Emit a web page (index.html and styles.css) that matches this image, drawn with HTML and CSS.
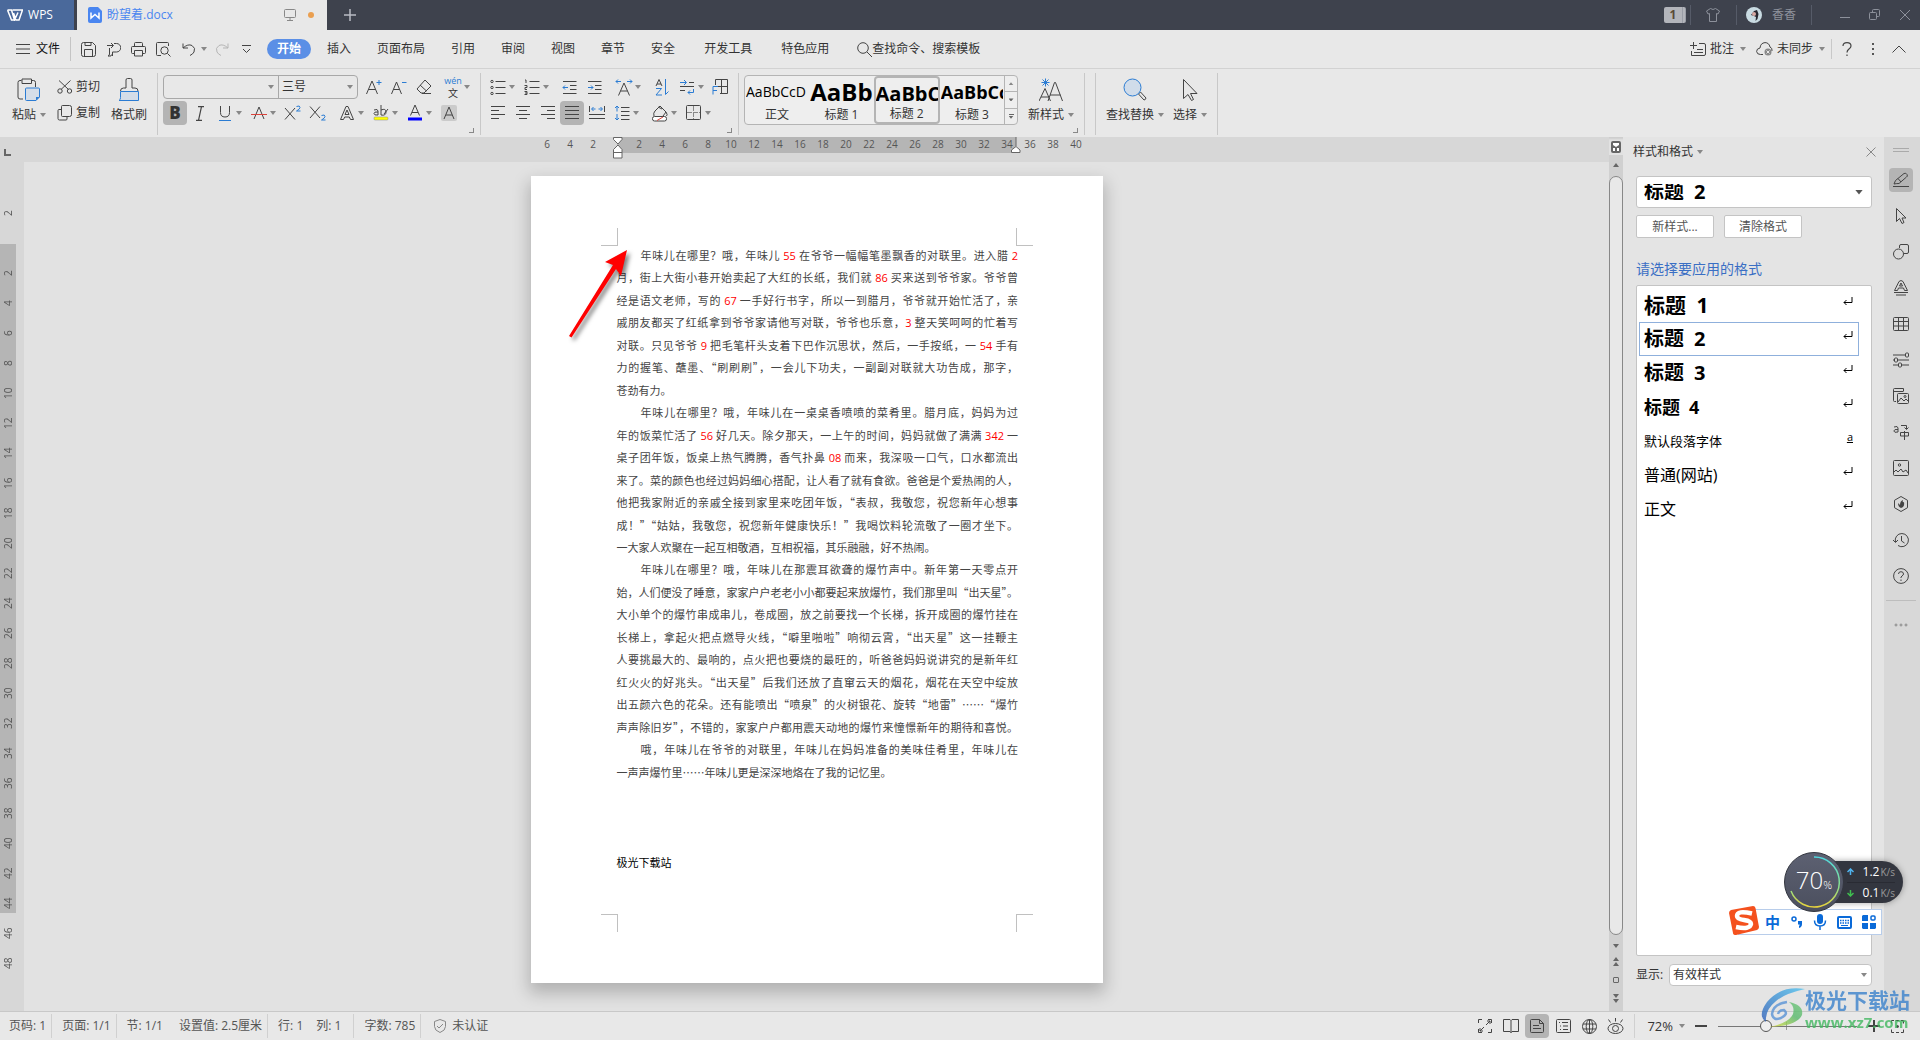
FILE: index.html
```html
<!DOCTYPE html>
<html lang="zh-CN">
<head>
<meta charset="utf-8">
<title>盼望着.docx - WPS</title>
<link rel="stylesheet" href="styles.css">
</head>
<body>
<header class="titlebar">
  <button class="home"><svg width="16" height="12" viewBox="0 0 16 12" class="ic white"><path d="M.5 1h4l3 10L11 3.500M.5 1l4 10h3M5.500 1h10L12 11H9L6.500 4" stroke-width="1.500"/></svg>WPS</button>
  <div class="tab">
    <svg width="14" height="16" viewBox="0 0 14 16"><path d="M2 0h8l4 4v10a2 2 0 0 1-2 2H2a2 2 0 0 1-2-2V2a2 2 0 0 1 2-2z" fill="#4a86f0"/><path d="M3 5.500v5.500L7 7.500 11 11V5.500" fill="none" stroke="#fff" stroke-width="1.500"/></svg>
    <span class="tabname">盼望着.docx</span>
    <svg width="12" height="12" viewBox="0 0 12 12" class="ic grey"><path d="M1.500.5h9q1 0 1 1v6q0 1-1 1h-9q-1 0-1-1v-6q0-1 1-1zM6 8.500v3M3 11.500h6"/></svg>
    <i class="dot"></i>
  </div>
  <button class="plus" aria-label="新建"><svg width="12" height="12" viewBox="0 0 12 12" class="ic"><path d="M6 0v12M0 6h12" stroke="#b9bcc4" stroke-width="1.500"/></svg></button>
  <div class="winctl">
    <span class="badge"><b>1</b></span><i class="vs"></i>
    <button class="shirt" aria-label="皮肤"><svg width="14" height="14" viewBox="0 0 14 14" class="ic dim"><path d="M4.500.5q2.500 2 5 0l4 2.500-1.500 3-1.500-.5v8h-7v-8L2 6 .5 3z"/></svg></button><i class="vs"></i>
    <span class="user"><svg width="16" height="16" viewBox="0 0 16 16"><circle cx="8" cy="8" r="8" fill="#c9dbe2"/><path d="M5 8l3-4 3-1 1.500 4-1 5-2 2 .5-4-2-1z" fill="#26272f"/><circle cx="8" cy="7" r="2" fill="#d8a9a3"/></svg>香香</span><i class="vs"></i>
    <button aria-label="最小化"><svg width="12" height="12" viewBox="0 0 12 12" class="ic dim"><path d="M1 8.500h10"/></svg></button>
    <button aria-label="还原"><svg width="12" height="12" viewBox="0 0 12 12" class="ic dim"><rect x=".5" y="3.500" width="7" height="7" rx="1"/><path d="M3.500 3.500v-2q0-1 1-1h5q1 0 1 1v5q0 1-1 1h-2"/></svg></button>
    <button aria-label="关闭"><svg width="12" height="12" viewBox="0 0 12 12" class="ic dim"><path d="M1 1l10 10M11 1L1 11"/></svg></button>
  </div>
</header>

<nav class="menubar">
  <button class="file"><svg width="14" height="10" viewBox="0 0 14 10" class="ic"><path d="M0 .5h14M0 5h14M0 9.500h14"/></svg>文件</button>
  <i class="mdiv"></i>
  <div class="quick">
    <button aria-label="保存"><svg width="15" height="15" viewBox="0 0 15 15" class="ic"><path d="M.5 2.500q0-2 2-2h9l3 3v9q0 2-2 2h-10q-2 0-2-2zM3.500 14v-6.500h8V14M4 .5v3h6v-3"/></svg></button>
    <button aria-label="输出"><svg width="15" height="15" viewBox="0 0 15 15" class="ic"><path d="M1 3.500h6M5 1l2.500 2.500L5 6M3.500 6v6q0 1.500-1.500 2h3q0-1 1-1.500M6.500 14v-4h4a3.800 3.800 0 0 0 0-8.500H8"/></svg></button>
    <button aria-label="打印"><svg width="15" height="15" viewBox="0 0 15 15" class="ic"><path d="M3.500 4.500v-3q0-1 1-1h6q1 0 1 1v3M3.500 11.500h-2q-1 0-1-1v-5q0-1 1-1h12q1 0 1 1v5q0 1-1 1h-2M3.500 8.500h8v5.500h-8z"/></svg></button>
    <button aria-label="打印预览"><svg width="15" height="15" viewBox="0 0 15 15" class="ic"><path d="M5 13.500H1.500q-1 0-1-1v-11q0-1 1-1h10q1 0 1 1V4M11.500 11.500l3 3"/><circle cx="8.500" cy="8.500" r="3.700"/></svg></button>
    <button aria-label="撤销"><svg width="14" height="14" viewBox="0 0 14 14" class="ic"><path d="M1 1.500v4.500h5M1 6q5-4.500 9-2.500 4 2.500 2 6.500-1 2-4 3.500"/></svg></button><i class="ca"></i>
    <button aria-label="恢复"><svg width="14" height="14" viewBox="0 0 14 14" class="ic pale"><path d="M13 1.500v4.500H8M13 6Q8 1.500 4 3.500 0 6 2 10q1 2 4 3.500"/></svg></button>
    <button aria-label="自定义"><svg width="9" height="9" viewBox="0 0 9 9" class="ic"><path d="M0 .5h9M1 4l3.500 3.500L8 4"/></svg></button>
  </div>
  <button class="on">开始</button>
  <div class="tabs"><button>插入</button><button>页面布局</button><button>引用</button><button>审阅</button><button>视图</button><button>章节</button><button>安全</button><button class="wide">开发工具</button><button>特色应用</button></div>
  <label class="search"><svg width="15" height="15" viewBox="0 0 15 15" class="ic"><circle cx="6" cy="6" r="5.300"/><path d="M10 10l5 5"/></svg><input type="text" placeholder="查找命令、搜索模板"></label>
  <div class="mright">
    <button><svg width="16" height="14" viewBox="0 0 16 14" class="ic"><path d="M3.500 0v7M0 3.500h7M9 1.500h5q1.500 0 1.500 1.500v9q0 1.500-1.500 1.500H1.500V9M7 7.500h6M4 10.500h9"/></svg>批注<i class="ca"></i></button>
    <button><svg width="17" height="14" viewBox="0 0 17 14" class="ic"><path d="M7 12.500H4.500Q1 12.500.6 9.500.6 6.500 4 6q.5-5 5-5.400Q13 .6 14 5q2.500 1 2 4"/><circle cx="12" cy="10" r="3.500" fill="#888" stroke="none"/><path d="M10.500 8.500l3 3m0-3l-3 3" stroke="#e8e8e8"/></svg>未同步<i class="ca"></i></button>
    <i class="vs light"></i>
    <button class="sq" aria-label="帮助"><svg width="10" height="14" viewBox="0 0 10 14" class="ic"><path d="M1 4Q1 .7 5 .7T9 4q0 1.500-2 3T5 10.500M5 12.500V14" stroke-width="1.200"/></svg></button>
    <button class="sq" aria-label="更多"><svg width="3" height="13" viewBox="0 0 3 13"><path d="M0 0h2v2H0zM0 5h2v2H0zM0 10h2v2H0z" fill="#555"/></svg></button>
    <button class="sq" aria-label="收起"><svg width="14" height="8" viewBox="0 0 14 8" class="ic"><path d="M.5 7.500L7 1l6.500 6.500"/></svg></button>
  </div>
</nav>

<section class="ribbon">
  <div class="group clip">
    <button class="big"><svg width="24" height="24" viewBox="0 0 24 24" class="ic"><path d="M4.500 2.500H3q-2 0-2 2V19q0 2 2 2h3M15 2.500h1.500q2 0 2 2V9M5 1h9.500v4.500H5z"/><path d="M8.500 11q0-1 1-1h12q1 0 1 1v8l-3.500 3.500H9.500q-1 0-1-1z" fill="#d4dde8" stroke="#2b7cd3"/><path d="M22.500 19H19v3.500z" fill="#2b7cd3" stroke="none"/></svg><span>粘贴<i class="ca"></i></span></button>
    <div class="stack">
      <button class="lb"><svg width="16" height="14" viewBox="0 0 16 14" class="ic"><path d="M2 .5l9.500 9M13.500.5L4 9.500"/><circle cx="3" cy="11" r="2.200"/><circle cx="12.500" cy="11" r="2.200"/></svg>剪切</button>
      <button class="lb"><svg width="16" height="16" viewBox="0 0 16 16" class="ic"><path d="M5.500.5h7q2 0 2 2v7q0 2-2 2h-7q-1 0-1-1v-9q0-1 1-1zM4.500 4.500H2q-1 0-1 1v8q0 1.500 1.500 1.500H9q1 0 1-1v-2.500"/></svg>复制</button>
    </div>
    <button class="big"><svg width="24" height="24" viewBox="0 0 24 24" class="ic"><path d="M3.500 13q0-3 3-3H9V2q0-1.500 1.500-1.500h3Q15 .5 15 2v8h3q3 0 3 3"/><path d="M3.500 13.500h18v9H2q1.500-.5 1.500-3z" fill="#d4dde8" stroke="#2b7cd3"/></svg><span>格式刷</span></button>
  </div>
  <div class="group font">
    <div class="row">
      <div class="combo"><span class="pick fam"><select aria-label="字体"><option></option></select></span><span class="pick size"><select aria-label="字号"><option>三号</option></select></span></div>
      <button class="ib" aria-label="增大"><svg width="18" height="16" viewBox="0 0 18 16" class="ic"><path d="M1.500 15L7 2l5.500 13M3.500 10.500h7"/><path d="M11.500 3.500h5M14 1v5" class="bl"/></svg></button>
      <button class="ib" aria-label="减小"><svg width="18" height="16" viewBox="0 0 18 16" class="ic"><path d="M1.500 15L6.500 3l5 12M3.500 10.500h6"/><path d="M12 3.500h4.500" class="bl"/></svg></button>
      <button class="ib" aria-label="清除"><svg width="18" height="16" viewBox="0 0 18 16" class="ic"><path d="M10 1l6 6-7 7H6L2 10zM5 6l6.500 6M7 14.500h9"/></svg></button>
      <button class="sb sp" aria-label="拼音"><span class="pin"><small>wén</small><em>文</em></span><i class="ca"></i></button>
    </div>
    <div class="row">
      <button class="ib act" aria-label="加粗"><b class="boldb">B</b></button>
      <button class="ib" aria-label="斜体"><svg width="10" height="15" viewBox="0 0 10 15" class="ic"><path d="M3 .7h6M1 14.300h6M6.500.7l-3 13.600" stroke-width="1.200"/></svg></button>
      <button class="sb" aria-label="下划线"><svg width="18" height="16" viewBox="0 0 18 16" class="ic"><path d="M4.500 1v6.500Q4.500 12 9 12t4.500-4.500V1"/><path d="M3 15.500h12" class="bl"/></svg><i class="ca"></i></button>
      <button class="sb" aria-label="删除线"><svg width="18" height="16" viewBox="0 0 18 16" class="ic"><path d="M4 14L9 2l5 12"/><path d="M1 9.500h16" stroke="#d9433b"/></svg><i class="ca"></i></button>
      <button class="ib" aria-label="上标"><svg width="18" height="16" viewBox="0 0 18 16" class="ic"><path d="M1 3l10 11.500M11 3L1 14.500"/><path d="M12.500 1.500q3.500-1.500 3.500 1 0 1.500-3.500 3.500h4" class="bl"/></svg></button>
      <button class="ib" aria-label="下标"><svg width="18" height="16" viewBox="0 0 18 16" class="ic"><path d="M1 1.500L11 13M11 1.500L1 13"/><path d="M12.500 10.500q3.500-1.500 3.500 1 0 1.500-3.500 3.500h4" class="bl"/></svg></button>
      <button class="sb sp" aria-label="文字效果"><svg width="18" height="16" viewBox="0 0 18 16" class="ic"><path d="M2.500 14.500L8 1.500h2l5.500 13h-3L11.300 12H6.700l-1.200 2.500zM7 9.500h4L9 5z"/></svg><i class="ca"></i></button>
      <button class="sb" aria-label="突出显示"><svg width="18" height="16" viewBox="0 0 18 16" class="ic"><path d="M2 5q4-1.500 4 1v4Q2 10.500 2 8.500T6 7M9 0v10q5 1 5-3t-5-2M16 4l-4 5" /><rect x="2" y="12" width="14" height="3" rx="1" fill="#ff0" stroke="#888" stroke-width=".5"/></svg><i class="ca"></i></button>
      <button class="sb" aria-label="字体颜色"><svg width="18" height="16" viewBox="0 0 18 16" class="ic"><path d="M4.500 10.500L9 0l4.500 10.500M6 7.500h6"/><rect x="2" y="12.500" width="14" height="3" fill="#00f" stroke="none"/></svg><i class="ca"></i></button>
      <button class="ib" aria-label="字符底纹"><svg width="16" height="16" viewBox="0 0 16 16" class="ic"><rect width="16" height="16" rx="2" fill="#cbcbcb" stroke="none"/><path d="M3 14L8 2l5 12M5 10h6"/></svg></button>
    </div>
    <i class="launch"></i>
  </div>
  <div class="group para">
    <div class="row">
      <button class="sb" aria-label="项目符号"><svg width="16" height="16" viewBox="0 0 16 16" class="ic"><path d="M5.500 2.500h10M5.500 8.500h10M5.500 14.500h10"/><circle cx="2" cy="2.500" r="1.200"/><circle cx="2" cy="8.500" r="1.200"/><circle cx="2" cy="14.500" r="1.200"/></svg><i class="ca"></i></button>
      <button class="sb" aria-label="编号"><svg width="16" height="16" viewBox="0 0 16 16" class="ic"><path d="M5.500 2.500h10M5.500 8.500h10M5.500 14.500h10M1 1h1v3M.5 6.500H3v2H1v2h2M.5 12.500H3v3H.5M1 14h2"/></svg><i class="ca"></i></button>
      <button class="ib sp" aria-label="减少缩进"><svg width="15" height="14" viewBox="0 0 15 14" class="ic"><path d="M1 1.500h13.500M8 5.500h6.500M8 9.500h6.500M1 13.500h13.500"/><path d="M1 7.500h5M3 5.500l-2 2 2 2" class="bl"/></svg></button>
      <button class="ib" aria-label="增加缩进"><svg width="15" height="14" viewBox="0 0 15 14" class="ic"><path d="M1 1.500h13.500M8 5.500h6.500M8 9.500h6.500M1 13.500h13.500"/><path d="M1 7.500h5M4 5.500l2 2-2 2" class="bl"/></svg></button>
      <button class="sb sp" aria-label="中文版式"><svg width="18" height="17" viewBox="0 0 18 17" class="ic"><path d="M3.500 16.500L9 4l5.500 12.500M5.500 12h7"/><path d="M6 2.500H1m2-2l-2 2 2 2M12 2.500h5m-2-2l2 2-2 2" class="bl"/></svg><i class="ca"></i></button>
      <button class="ib sp" aria-label="排序"><svg width="14" height="17" viewBox="0 0 14 17" class="ic"><path d="M1 7l3-6.500L7 7M2 5h4"/><path d="M1 9.500h5.500l-5.500 6.500h6M10.500 0v15.500l3-3" class="bl"/></svg></button>
      <button class="sb" aria-label="制表符"><svg width="16" height="16" viewBox="0 0 16 16" class="ic"><path d="M10 3.500h5M1 7.500h14M1 11.500h5"/><path d="M1 3.500h6M5 1l2.500 2.500L5 6M14.500 10v3.500H9m2-2l-2 2 2 2" class="bl"/></svg><i class="ca"></i></button>
      <button class="ib" aria-label="段落布局"><svg width="17" height="16" viewBox="0 0 17 16" class="ic"><path d="M3.500 6V.5h12v14H8M9.500.5v14M3.500 7.500h12"/><path d="M1 15.500v-8h5M1 11.500h4" class="bl"/></svg></button>
    </div>
    <div class="row">
      <button class="ib" aria-label="左对齐"><svg width="14" height="14" viewBox="0 0 14 14" class="ic"><path d="M0 .5h14M0 4.500h8M0 8.500h14M0 12.500h8"/></svg></button>
      <button class="ib" aria-label="居中"><svg width="14" height="14" viewBox="0 0 14 14" class="ic"><path d="M0 .5h14M3 4.500h8M0 8.500h14M3 12.500h8"/></svg></button>
      <button class="ib" aria-label="右对齐"><svg width="14" height="14" viewBox="0 0 14 14" class="ic"><path d="M0 .5h14M6 4.500h8M0 8.500h14M6 12.500h8"/></svg></button>
      <button class="ib act" aria-label="两端对齐"><svg width="14" height="14" viewBox="0 0 14 14" class="ic"><path d="M0 .5h14M0 4.500h14M0 8.500h14M0 12.500h14"/></svg></button>
      <button class="ib" aria-label="分散对齐"><svg width="16" height="14" viewBox="0 0 16 14" class="ic"><path d="M.5 0v6M15.500 0v6M0 8.500h16M0 12.500h16"/><path d="M3 3h3.500M4.500 1l-2 2 2 2M9.500 3H13M11.500 1l2 2-2 2" class="bl"/></svg></button>
      <button class="sb" aria-label="行距"><svg width="16" height="16" viewBox="0 0 16 16" class="ic"><path d="M7 2.500h8.500M7 6.500h8.500M7 10.500h8.500M7 14.500h8.500"/><path d="M3 1v5.500M1 3l2-2 2 2M3 9v6M1 13l2 2 2-2" class="bl"/></svg><i class="ca"></i></button>
      <button class="sb sp" aria-label="底纹"><svg width="18" height="17" viewBox="0 0 18 17" class="ic"><path d="M3 11q-1-3 1-5l5-5 6 6-3 4M7 2l4 2M15 7q2 3 .5 4"/><rect x="1.500" y="11.500" width="14" height="4.500" rx="2" fill="#fff"/><path d="M6 15.500l6-3.500" stroke="#d9433b"/></svg><i class="ca"></i></button>
      <button class="sb" aria-label="边框"><svg width="16" height="16" viewBox="0 0 16 16" class="ic"><rect x=".5" y=".5" width="14" height="14" rx="1"/><path d="M7.500 1v13M1 7.500h13" stroke="#888" stroke-dasharray="5 1"/></svg><i class="ca"></i></button>
    </div>
    <i class="launch"></i>
  </div>
  <div class="group styles">
    <div class="gallery">
      <button class="g"><span class="s0">AaBbCcD</span>正文</button>
      <button class="g"><span class="s1">AaBb</span>标题 1</button>
      <button class="g sel"><span class="s2">AaBbC</span>标题 2</button>
      <button class="g"><span class="s3">AaBbCc</span>标题 3</button>
      <div class="step"><button aria-label="上"><i class="ca up"></i></button><button aria-label="下"><i class="ca dk"></i></button><button aria-label="展开"><i class="bar"></i><i class="ca dk"></i></button></div>
    </div>
    <button class="big new"><svg width="24" height="24" viewBox="0 0 24 24" class="ic"><path d="M0 23L6 10.500 11.500 23M2 19h8M9 23l6.500-18.500h1L23.500 23M11 17h10.500"/><path d="M6.500.5v8M2.500 4.500h8M3.500 1.500l6 6M9.500 1.500l-6 6" class="bl"/></svg><span>新样式<i class="ca"></i></span></button>
    <i class="launch"></i>
  </div>
  <div class="group edit">
    <button class="big"><svg width="24" height="24" viewBox="0 0 24 24" class="ic"><path d="M15.500 16l2-2 5.500 6q-.5 2-2 2z"/><circle cx="9.500" cy="9.500" r="8.500" fill="#d0dcea" stroke="#2b7cd3"/></svg><span>查找替换<i class="ca"></i></span></button>
    <button class="big"><svg width="24" height="24" viewBox="0 0 24 24" class="ic"><path d="M5.500 1.500v19l4.500-4 3.500 6 2-1-3-6h6.500z"/></svg><span>选择<i class="ca"></i></span></button>
  </div>
</section>

<main class="work">
  <section class="editor">
    <div class="corner"></div>
    <div class="hruler"><div class="hband"><span>6</span><span>4</span><span>2</span><span></span><span>2</span><span>4</span><span>6</span><span>8</span><span>10</span><span>12</span><span>14</span><span>16</span><span>18</span><span>20</span><span>22</span><span>24</span><span>26</span><span>28</span><span>30</span><span>32</span><span>34</span><span>36</span><span>38</span><span>40</span>
      <svg class="mk left" width="10" height="22" viewBox="0 0 10 22"><path d="M.5.5h8.500v2L5 7 .5 2.500zM5 8l4 4.500v8.500H.5v-8.500zM.5 15.500h8.500" fill="#fff" stroke="#666"/></svg>
      <svg class="mk right" width="10" height="16" viewBox="0 0 10 16"><path d="M5 0v9" stroke="#666"/><path d="M5 9.500l4 3.500v2.500H.5V13z" fill="#fff" stroke="#666"/></svg></div></div>
    <div class="vruler"><span>2</span><span></span><span>2</span><span>4</span><span>6</span><span>8</span><span>10</span><span>12</span><span>14</span><span>16</span><span>18</span><span>20</span><span>22</span><span>24</span><span>26</span><span>28</span><span>30</span><span>32</span><span>34</span><span>36</span><span>38</span><span>40</span><span>42</span><span>44</span><span>46</span><span>48</span></div>
    <div class="canvas">
      <article class="page">
        <i class="cm tl"></i><i class="cm tr"></i><i class="cm bl2"></i><i class="cm br"></i>
        <div class="text">
          <p><span class="in">年味儿在哪里？哦，年味儿 <b>55</b> 在爷爷一幅幅笔墨飘香的对联里。进入腊 <b>2</b></span><span>月，街上大街小巷开始卖起了大红的长纸，我们就 <b>86</b> 买来送到爷爷家。爷爷曾</span><span>经是语文老师，写的 <b>67</b> 一手好行书字，所以一到腊月，爷爷就开始忙活了，亲</span><span>戚朋友都买了红纸拿到爷爷家请他写对联，爷爷也乐意，<b>3</b> 整天笑呵呵的忙着写</span><span>对联。只见爷爷 <b>9</b> 把毛笔杆头支着下巴作沉思状，然后，一手按纸，一 <b>54</b> 手有</span><span>力的握笔、蘸墨、“刷刷刷”，一会儿下功夫，一副副对联就大功告成，那字，</span><span class="end">苍劲有力。</span></p>
          <p><span class="in">年味儿在哪里？哦，年味儿在一桌桌香喷喷的菜肴里。腊月底，妈妈为过</span><span>年的饭菜忙活了 <b>56</b> 好几天。除夕那天，一上午的时间，妈妈就做了满满 <b>342</b> 一</span><span>桌子团年饭，饭桌上热气腾腾，香气扑鼻 <b>08</b> 而来，我深吸一口气，口水都流出</span><span>来了。菜的颜色也经过妈妈细心搭配，让人看了就有食欲。爸爸是个爱热闹的人，</span><span>他把我家附近的亲戚全接到家里来吃团年饭，“表叔，我敬您，祝您新年心想事</span><span>成！”“姑姑，我敬您，祝您新年健康快乐！”我喝饮料轮流敬了一圈才坐下。</span><span class="end">一大家人欢聚在一起互相敬酒，互相祝福，其乐融融，好不热闹。</span></p>
          <p><span class="in">年味儿在哪里？哦，年味儿在那震耳欲聋的爆竹声中。新年第一天零点开</span><span>始，人们便没了睡意，家家户户老老小小都要起来放爆竹，我们那里叫“出天星”。</span><span>大小单个的爆竹串成串儿，卷成圈，放之前要找一个长梯，拆开成圈的爆竹挂在</span><span>长梯上，拿起火把点燃导火线，“噼里啪啦”响彻云霄，“出天星”这一挂鞭主</span><span>人要挑最大的、最响的，点火把也要烧的最旺的，听爸爸妈妈说讲究的是新年红</span><span>红火火的好兆头。“出天星”后我们还放了直窜云天的烟花，烟花在天空中绽放</span><span>出五颜六色的花朵。还有能喷出“喷泉”的火树银花、旋转“地雷”……“爆竹</span><span>声声除旧岁”，不错的，家家户户都用震天动地的爆竹来憧憬新年的期待和喜悦。</span></p>
          <p><span class="in">哦，年味儿在爷爷的对联里，年味儿在妈妈准备的美味佳肴里，年味儿在</span><span class="end">一声声爆竹里……年味儿更是深深地烙在了我的记忆里。</span></p>
          <p><span></span><span></span><span></span><span class="end sign">极光下载站</span></p>
        </div>
        <svg class="arrow" width="76" height="104" viewBox="0 0 76 104"><path d="M7 91L51 20l-8-3L65 5l-6 26-5-7L9.500 92.500z" fill="#f00"/></svg>
      </article>
    </div>
  </section>

  <div class="scroll">
    <svg width="10" height="12" viewBox="0 0 10 12"><rect width="10" height="12" rx="2" fill="#666"/><path d="M2 2h6v2L5 6 2 4zM2 7h2v3H2zM6 7h2v3H6z" fill="#fff"/></svg>
    <div class="rail"><i class="ca up dk"></i><div class="thumb"></div><i class="ca dk"></i>
      <span class="dbl"><i class="ca up dk"></i><i class="ca up dk"></i></span><i class="sqr"></i><span class="dbl"><i class="ca dk"></i><i class="ca dk"></i></span></div>
  </div>

  <aside class="panel">
    <div class="phead"><span>样式和格式<i class="ca"></i></span><button aria-label="关闭"><svg width="10" height="10" viewBox="0 0 10 10" class="ic grey"><path d="M.5.5l9 9M9.500.5l-9 9"/></svg></button></div>
    <span class="pick cur"><select aria-label="当前样式"><option>标题&ensp;2</option></select></span>
    <div class="pbtn"><button>新样式...</button><button>清除格式</button></div>
    <h2>请选择要应用的格式</h2>
    <div class="list">
      <button class="h22">标题&ensp;1<svg width="10" height="8" viewBox="0 0 10 8"><path d="M9 0v5.500H1M3.500 3L1 5.500 3.500 8" fill="none" stroke="#000"/></svg></button>
      <button class="h20 sel">标题&ensp;2<svg width="10" height="8" viewBox="0 0 10 8"><path d="M9 0v5.500H1M3.500 3L1 5.500 3.500 8" fill="none" stroke="#000"/></svg></button>
      <button class="h20">标题&ensp;3<svg width="10" height="8" viewBox="0 0 10 8"><path d="M9 0v5.500H1M3.500 3L1 5.500 3.500 8" fill="none" stroke="#000"/></svg></button>
      <button class="h18">标题&ensp;4<svg width="10" height="8" viewBox="0 0 10 8"><path d="M9 0v5.500H1M3.500 3L1 5.500 3.500 8" fill="none" stroke="#000"/></svg></button>
      <button class="n13">默认段落字体<u>a</u></button>
      <button class="n16">普通(网站)<svg width="10" height="8" viewBox="0 0 10 8"><path d="M9 0v5.500H1M3.500 3L1 5.500 3.500 8" fill="none" stroke="#000"/></svg></button>
      <button class="n16">正文<svg width="10" height="8" viewBox="0 0 10 8"><path d="M9 0v5.500H1M3.500 3L1 5.500 3.500 8" fill="none" stroke="#000"/></svg></button>
    </div>
    <div class="show"><label for="show">显示:</label><span class="pick"><select id="show"><option>有效样式</option></select></span></div>
  </aside>

  <nav class="side">
    <i class="grip"></i>
    <button class="act" aria-label="样式"><svg width="16" height="16" viewBox="0 0 16 16" class="ic"><path d="M0 14.500h16M1 12l1.500-3.500L11 1.500q2-1 3 1t-.5 2.500L6 11.500q-3 0-5 .5zM5 6.500l3 3.500"/></svg></button>
    <button aria-label="选择"><svg width="16" height="16" viewBox="0 0 16 16" class="ic"><path d="M3.500.5v13l3-3 2.500 5 2-1-2-4.500h4z"/></svg></button>
    <button aria-label="形状"><svg width="16" height="16" viewBox="0 0 16 16" class="ic"><path d="M6.500 4V2q0-1.500 1.500-1.500h6q1.500 0 1.500 1.500v6q0 1.500-1.500 1.500h-3"/><circle cx="5.500" cy="10" r="5"/></svg></button>
    <button aria-label="艺术字"><svg width="16" height="16" viewBox="0 0 16 16" class="ic"><path d="M1.500 10.500L6 1.500q2-2 4 0l4.500 9h-3L10.500 8h-5l-1 2.500zM6.500 6h3L8 3zM1 12.500h14M3 15h10"/></svg></button>
    <button aria-label="表格"><svg width="16" height="16" viewBox="0 0 16 16" class="ic"><rect x=".5" y="1.500" width="15" height="13" rx="1"/><path d="M1 5.500h14M1 10h14M5.500 2v12M10.500 2v12"/></svg></button>
    <button aria-label="设置"><svg width="16" height="16" viewBox="0 0 16 16" class="ic"><path d="M0 3h12M0 8h1.500M5 8h11M0 13h5M9 13h7"/><rect x="12.500" y="1" width="3" height="4" rx="1"/><rect x="1.500" y="6" width="3" height="4" rx="1"/><rect x="5.500" y="11" width="3" height="4" rx="1"/></svg></button>
    <button aria-label="素材"><svg width="16" height="16" viewBox="0 0 16 16" class="ic"><path d="M10.500 3V.5h-9q-1 0-1 1v11q0 1 1 1H3M.5 3.500h10"/><rect x="4.500" y="5.500" width="11" height="10" rx="1"/><path d="M5 14l3-4 3 3 2-2 2 2"/><circle cx="12" cy="8.500" r="1"/></svg></button>
    <button aria-label="翻译"><svg width="16" height="16" viewBox="0 0 16 16" class="ic"><path d="M1 3q4-1.500 4 1v4Q1 9 .8 7 1 5 5 5.500M8 1.500h5.500V5M11.500 3.500l2 2 2-2M7.500 8.500h8v3.500h-8zM11.500 7v9"/></svg></button>
    <button aria-label="图片"><svg width="16" height="16" viewBox="0 0 16 16" class="ic"><rect x=".5" y=".5" width="15" height="15" rx="1"/><path d="M1 12l2-2 2 2 3-3 2 3 3-2 2 3"/><circle cx="6.500" cy="5" r="1.200"/></svg></button>
    <button aria-label="推荐"><svg width="16" height="16" viewBox="0 0 16 16" class="ic"><path d="M8 .5l6.500 3.800v7.400L8 15.500l-6.500-3.800V4.300z"/><path d="M5 7l2 2q0-4 3-5-1 3 1 2 1 5-3 6-3-1-3-5z" fill="#444" stroke="none"/></svg></button>
    <button aria-label="历史"><svg width="16" height="16" viewBox="0 0 16 16" class="ic"><path d="M2.500 10A6.600 6.600 0 1 1 5 13.500M0 8l2.500 2.500L5 8M8.500 4v5l3 2"/></svg></button>
    <button aria-label="帮助"><svg width="16" height="16" viewBox="0 0 16 16" class="ic"><circle cx="8" cy="8" r="7.400"/><path d="M5.500 6q0-2.300 2.500-2.300T10.500 6Q10.500 7 9 8T8 10M8 11.500V13"/></svg></button>
    <i class="line"></i>
    <button aria-label="更多"><svg width="14" height="4" viewBox="0 0 14 4" class="ic grey"><circle cx="2" cy="2" r="1"/><circle cx="7" cy="2" r="1"/><circle cx="12" cy="2" r="1"/></svg></button>
  </nav>
</main>

<footer class="status">
  <div class="sinfo"><span>页码: 1</span><span>页面: 1/1</span><span class="two">节: 1/1<em>设置值: 2.5厘米</em></span><span class="pos">行: 1<em>列: 1</em></span><span>字数: 785</span><span class="cert"><svg width="12" height="14" viewBox="0 0 12 14" class="ic grey"><path d="M6 .5l5.500 2v5q0 4-5.500 6-5.500-2-5.500-6v-5zM3 7l2 2 4-4"/></svg>未认证</span></div>
  <div class="views">
    <button aria-label="全屏"><svg width="14" height="14" viewBox="0 0 14 14" class="ic"><path d="M.5 4V.5H4M10 .5h3.500V4M13.500 10v3.500H10M4 13.500H.5V10M8 6l4-4M9 2h3v3M6 8l-4 4M2 9v3h3"/></svg></button>
    <button aria-label="阅读"><svg width="16" height="14" viewBox="0 0 16 14" class="ic"><path d="M8 1.500V14M.5.5H7l1 1 1-1h6.500v12H9l-1 1-1-1H.5z"/></svg></button>
    <button class="act" aria-label="页面"><svg width="14" height="14" viewBox="0 0 14 14" class="ic"><path d="M1.500.5h8l4 4v8q0 1-1 1h-11q-1 0-1-1v-11q0-1 1-1zM9.500.5v4h4M3 6.500h6M3 9.500h8"/></svg></button>
    <button aria-label="大纲"><svg width="15" height="14" viewBox="0 0 15 14" class="ic"><rect x=".5" y=".5" width="14" height="13" rx="1"/><path d="M3 3.500h1M6 3.500h6M4 7h1M7 7h5M4 10.500h1M7 10.500h5"/></svg></button>
    <button aria-label="网页"><svg width="15" height="15" viewBox="0 0 15 15" class="ic"><circle cx="7.500" cy="7.500" r="7"/><ellipse cx="7.500" cy="7.500" rx="3.300" ry="7"/><path d="M1 5h13M1 10h13M7.500.5v14"/></svg></button>
    <button aria-label="护眼"><svg width="17" height="16" viewBox="0 0 17 16" class="ic"><ellipse cx="8.500" cy="10.500" rx="7.500" ry="5"/><circle cx="8.500" cy="10.500" r="3"/><path d="M8.500 0v3.500M1.500 1.500l2 3M15.500 1.500l-2 3"/></svg></button>
  </div>
  <div class="zoom"><button class="pct">72%<i class="ca"></i></button><button aria-label="缩小"><svg width="12" height="12" viewBox="0 0 12 12" class="ic"><path d="M0 6h12" stroke-width="2"/></svg></button><input type="range" min="0" max="100" value="33" aria-label="缩放"><button aria-label="放大"><svg width="12" height="12" viewBox="0 0 12 12" class="ic"><path d="M0 6h12M6 0v12" stroke-width="2"/></svg></button><button aria-label="适合"><svg width="13" height="13" viewBox="0 0 13 13" class="ic"><path d="M3 .5H.5v3M10 .5h2.500v3M3 12.500H.5v-3M10 12.500h2.500v-3M5 .5h3M5 12.500h3"/><circle cx="6.500" cy="6.500" r="1" fill="#444"/></svg></button></div>
</footer>

<div class="net">
  <div class="ring"><svg width="60" height="60" viewBox="0 0 60 60"><defs><linearGradient id="rg" x1="0" y1="0" x2="0" y2="1"><stop offset="0" stop-color="#4fd8e0"/><stop offset=".6" stop-color="#8be08c"/><stop offset="1" stop-color="#e8d33c"/></linearGradient><linearGradient id="bg" x1="0" y1="0" x2="0" y2="1"><stop offset="0" stop-color="#5d6172"/><stop offset="1" stop-color="#4b4f5e"/></linearGradient></defs><circle cx="30" cy="30" r="29.500" fill="url(#bg)" stroke="#33363f"/><path d="M30 5a25 25 0 1 1-23 34" fill="none" stroke="url(#rg)" stroke-width="1.500"/></svg><span>70<small>%</small></span></div>
  <div class="speed">
    <span><svg width="7" height="7" viewBox="0 0 7 7"><path d="M3.500 7V1M.5 4l3-3 3 3" fill="none" stroke="#4fb4f0" stroke-width="1.500"/></svg>1.2<small>K/s</small></span>
    <span><svg width="7" height="7" viewBox="0 0 7 7"><path d="M3.500 0v6M.5 3l3 3 3-3" fill="none" stroke="#3fbf4f" stroke-width="1.500"/></svg>0.1<small>K/s</small></span>
  </div>
</div>
<div class="ime">
  <svg class="slogo" width="32" height="32" viewBox="0 0 32 32"><path d="M3 5L25 1q2 0 2.500 2L31 22q0 2-2 3L8 30q-3 0-3-2L1 8q0-2 2-3z" fill="#f4511e"/><path d="M24 8.500Q9 5 9 11q0 3 7 4t7 4q-1 6-15 3" fill="none" stroke="#fff" stroke-width="4.500"/></svg>
  <b>中</b>
  <svg width="14" height="14" viewBox="0 0 14 14"><circle cx="4" cy="4" r="2" fill="none" stroke="#0a6ad8" stroke-width="1.500"/><path d="M8 6h4v3q0 3-3 4v-2q1-1 .5-1.500H8z" fill="#0a6ad8"/></svg>
  <svg width="14" height="16" viewBox="0 0 14 16"><rect x="4" width="6" height="10" rx="3" fill="#0a6ad8"/><path d="M1.500 6.500Q1.500 12 7 12t5.500-5.500M7 12v4" fill="none" stroke="#0a6ad8" stroke-width="1.500"/></svg>
  <svg width="15" height="13" viewBox="0 0 15 13"><rect x="1" y="1" width="13" height="11" rx="1" fill="none" stroke="#0a6ad8" stroke-width="2"/><path d="M3 4.500h9M3 7h9" stroke="#0a6ad8" stroke-width="1.500" stroke-dasharray="1.500 1"/><path d="M4 9.500h7" stroke="#0a6ad8"/></svg>
  <svg width="14" height="14" viewBox="0 0 14 14"><path d="M1 0h5v6H0V1zM0 8h6v6H1l-1-1zM8 8h6v5l-1 1H8z" fill="#0a6ad8"/><rect x="9" y="1" width="4" height="4" rx="1" fill="none" stroke="#0a6ad8" stroke-width="1.500"/></svg>
</div>
<div class="mark">
  <svg width="44" height="42" viewBox="0 0 44 42"><defs><linearGradient id="m1" x1="0" y1="1" x2="1" y2="0"><stop offset="0" stop-color="#2f5fb8"/><stop offset="1" stop-color="#4fc3f0"/></linearGradient><linearGradient id="m2" x1="0" y1="1" x2="1" y2="0"><stop offset="0" stop-color="#e8e33c"/><stop offset=".6" stop-color="#57b86a"/><stop offset="1" stop-color="#6fc77a"/></linearGradient></defs><path d="M44 1Q20-3 6 14-4 28 5 34 4 22 14 14 22 6 44 1z" fill="url(#m1)"/><path d="M28 14q15 3 13 13Q36 38 8 39q20-4 24-13 2-8-4-12z" fill="url(#m2)"/><path d="M26 14Q12 16 11 26q1 7 9 4 8-4 3-8-5 0-6 4" fill="none" stroke="#5a94d6" stroke-width="2.500"/></svg>
  <div><strong>极光下载站</strong><a href="#">www.xz7.com</a></div>
</div>
</body>
</html>
```
FILE: styles.css
```css
* { box-sizing: border-box; }
html, body { height: 100%; margin: 0; }
body {
  display: flex; flex-direction: column; position: relative; overflow: hidden;
  font: 12px/16px "Open Sans", "Noto Sans CJK SC", sans-serif; color: #333; background: #e8e8e8;
}
button, select, input { font: inherit; color: inherit; border: 0; background: none; padding: 0; margin: 0; outline: 0; }
button { display: flex; align-items: center; justify-content: center; white-space: nowrap; }
select { appearance: none; width: 100%; height: 100%; }
i, em { font-style: normal; }
svg { display: block; flex: none; }
.ic { fill: none; stroke: #444; }
.ic.white { stroke: #fff; }
.ic.grey { stroke: #888; }
.ic.dim { stroke: #8d919b; }
.ic.pale { stroke: #b5b5b5; }
.ic .bl { stroke: #2b7cd3; }
.ca { flex: none; width: 6px; height: 4px; background: #888; clip-path: polygon(0 0, 100% 0, 50% 100%); }
.ca.up { clip-path: polygon(50% 0, 100% 100%, 0 100%); }
.ca.dk { background: #666; }

/* title bar */
.titlebar { flex: none; display: flex; height: 30px; background: #3e424d; }
.home { width: 74px; gap: 5px; padding-right: 14px; background: #4a699b; color: #fff; }
.tab { display: flex; align-items: center; width: 250px; margin-left: 3px; padding: 0 13px 0 11px; background: #e8e8e8; }
.tabname { flex: 1; margin-left: 5px; color: #4a86f0; }
.dot { width: 6px; height: 6px; margin-left: 12px; border-radius: 50%; background: #ea9f50; }
.plus { width: 46px; }
.winctl { display: flex; align-items: center; margin-left: auto; color: #8d919b; }
.winctl > button { width: 30px; height: 30px; }
.winctl .shirt { width: 45px; }
.badge { display: flex; width: 22px; height: 16px; margin-right: 4px; border-right: 4px double #9a9da6; border-radius: 2px; background: #b3b5bb; color: #5b4a36; justify-content: center; }
.vs { width: 1px; height: 20px; background: #565b68; }
.vs.light { background: #c8c8c8; }
.user { display: flex; align-items: center; gap: 10px; padding: 0 15px 0 9px; }
.winctl .user + .vs { margin-right: 18px; }

/* menu bar */
.menubar { flex: none; display: flex; align-items: center; height: 39px; padding: 0 14px 0 16px; border-bottom: 1px solid #d2d2d2; }
.file { gap: 6px; color: #111; }
.mdiv { width: 1px; height: 24px; margin-left: 10px; background: #c4c4c4; }
.quick { display: flex; align-items: center; width: 196px; padding-left: 5px; }
.quick button { width: 25px; height: 24px; }
.quick .ca { margin: 0 2px 0 0; }
.on { width: 44px; height: 20px; margin: 0 16px 0 0; border-radius: 10px; background: #5b8fe6; color: #fff; font-weight: bold; }
.tabs { display: flex; gap: 26px; }
.tabs .wide { padding: 0 3px; }
.search { display: flex; align-items: center; margin-left: 28px; }
.search input { width: 130px; }
.search input::placeholder { color: #333; opacity: 1; }
.mright { display: flex; align-items: center; gap: 10px; margin-left: auto; }
.mright > button { gap: 4px; }
.mright > button .ca { margin-left: 2px; }
.mright .vs { margin: 0 -4px; }
.mright .sq { width: 14px; margin-left: 2px; }

/* ribbon */
.ribbon { flex: none; display: flex; height: 68px; padding: 4px 0 2px; }
.group { position: relative; border-right: 1px solid #c8c8c8; padding-top: 2px; }
.row { display: flex; align-items: center; height: 24px; margin-bottom: 2px; }
.clip { display: flex; gap: 11px; width: 158px; padding-left: 12px; }
.big { flex-direction: column; justify-content: flex-start; gap: 5px; padding-top: 3px; }
.big span { display: flex; align-items: center; gap: 4px; }
.stack { display: flex; flex-direction: column; gap: 2px; }
.lb { height: 24px; gap: 3px; }
.font { width: 323px; padding-left: 5px; }
.para { width: 258px; padding-left: 4px; }
.combo { display: flex; width: 195px; height: 24px; margin-right: 3px; border: 1px solid #a8a8a8; border-radius: 4px; }
.pick { display: grid; align-items: center; }
.pick > select, .pick::after { grid-area: 1 / 1; }
.pick::after { content: ""; justify-self: end; width: 6px; height: 4px; margin-right: 4px; background: #888; clip-path: polygon(0 0, 100% 0, 50% 100%); pointer-events: none; }
.fam { width: 115px; border-right: 1px solid #a8a8a8; }
.size { flex: 1; padding-left: 3px; }
.ib { width: 25px; height: 24px; }
.act { width: 24px; height: 24px; border-radius: 4px; background: #b4b4b4; }
.sb { width: 34px; height: 24px; padding-left: 4px; gap: 2px; justify-content: flex-start; }
.sb > svg { width: 18px; }
.sp { margin-left: 4px; }
.pin { display: flex; flex-direction: column; align-items: center; width: 18px; color: #333; }
.pin small { font-size: 9px; line-height: 12px; color: #2b7cd3; }
.pin em { font-size: 10px; line-height: 12px; }
.boldb { font-size: 17px; font-weight: 800; }
.launch { position: absolute; right: 6px; bottom: 2px; width: 5px; height: 5px; border: solid #888; border-width: 0 1px 1px 0; }
.styles { display: flex; gap: 10px; width: 346px; padding-left: 5px; }
.gallery { display: flex; width: 274px; height: 50px; border: 1px solid #b4b4b4; border-radius: 4px; background: #eee; overflow: hidden; }
.g { flex: 1; min-width: 0; flex-direction: column; justify-content: flex-end; padding: 0 1px 1px; color: #333; }
.g span { align-self: stretch; height: 32px; overflow: hidden; line-height: 32px; text-align: left; color: #000; }
.g.sel { border: 2px solid #b4b4b4; border-radius: 4px; padding: 0; }
.g.sel span { height: 31px; }
.s0 { font-size: 14px; }
.s1 { font-size: 24px; font-weight: bold; }
.s2 { font-size: 20px; font-weight: bold; }
.s3 { font-size: 18px; font-weight: bold; }
.step { display: flex; flex-direction: column; width: 13px; border-left: 1px solid #b4b4b4; }
.step button { flex: 1; flex-direction: column; gap: 1px; }
.step button + button { border-top: 1px solid #b4b4b4; }
.step .ca { width: 5px; height: 3px; }
.bar { width: 5px; height: 1px; background: #666; }
.edit { display: flex; gap: 9px; width: 123px; margin-left: 10px; padding-left: 10px; border-left: 1px solid #c8c8c8; }

/* workspace */
.work { flex: 1; min-height: 0; display: flex; background: #e2e2e2; box-shadow: inset 0 2px 2px #cdcdcd; }
.editor { flex: 1; display: grid; grid-template: 25px 1fr / 24px 1fr; min-width: 0; overflow: hidden; font-size: 10px; color: #555; }
.corner { background: #d7d7d7; padding: 12px 4px; }
.corner::before { content: ""; display: block; width: 5px; height: 5px; border: solid #666; border-width: 0 0 2px 2px; }
.hruler { display: flex; justify-content: center; background: #d7d7d7; }
.hband { flex: none; display: flex; position: relative; width: 572px; height: 16px; padding-left: 5px; background: linear-gradient(#b5b5b5, #b5b5b5) 86px 0 / 399px 16px no-repeat; }
.hband span { flex: none; width: 23px; line-height: 15px; text-align: center; }
.mk { position: absolute; top: 0; }
.mk.left { left: 82px; }
.mk.right { left: 480px; }
.vruler { display: flex; flex-direction: column; padding-top: 36px; background: linear-gradient(#b5b5b5, #b5b5b5) 0 82px / 16px 669px no-repeat, #d7d7d7; }
.vruler span { flex: none; width: 16px; height: 30px; writing-mode: vertical-rl; transform: rotate(180deg); text-align: center; line-height: 16px; }
.canvas { display: flex; justify-content: center; align-items: flex-start; padding-top: 14px; min-width: 0; overflow: hidden; }
.page { flex: none; position: relative; width: 572px; min-height: 807px; padding: 68px 87px 0 86px; background: #fff; box-shadow: 0 8px 16px 2px rgba(0, 0, 0, .22); }
.text { display: grid; grid-auto-rows: 1fr; height: 629px; font: 11px/22px "Noto Sans CJK SC", sans-serif; color: #444; }
.text p { display: contents; }
.text span { white-space: nowrap; text-align: justify; text-align-last: justify; }
.text .in { padding-left: 24px; }
.text .end { text-align-last: left; }
.text b { font: 11px/16px "Open Sans", sans-serif; color: #f00; }
.text .sign { color: #000; }
.cm { position: absolute; width: 17px; height: 18px; border: 0 solid #c0c0c0; }
.tl { left: 70px; top: 52px; border-width: 0 1px 1px 0; }
.tr { right: 70px; top: 52px; border-width: 0 0 1px 1px; }
.bl2 { left: 70px; top: 738px; border-width: 1px 1px 0 0; }
.br { right: 70px; top: 738px; border-width: 1px 0 0 1px; }
.arrow { position: absolute; left: 31px; top: 69px; filter: drop-shadow(3px 3px 2px rgba(0, 0, 0, .5)); }

/* scroll bar */
.scroll { display: flex; flex-direction: column; align-items: center; width: 14px; padding-top: 4px; gap: 2px; }
.rail { flex: 1; display: flex; flex-direction: column; align-items: center; align-self: stretch; gap: 9px; padding: 8px 0; background: #d0d0d0; }
.thumb { flex: 1; align-self: stretch; border: 1px solid #888; border-radius: 7px; background: #e8e8e8; }
.dbl { display: grid; gap: 1px; }
.sqr { width: 6px; height: 6px; margin: 2px 0; border: 1px solid #666; border-radius: 1px; }

/* styles panel */
.panel { flex: none; display: flex; flex-direction: column; width: 261px; padding: 7px 12px 25px 13px; background: #e4e4e4; }
.phead { display: flex; justify-content: space-between; height: 32px; margin: 0 -4px 0 -3px; align-items: flex-start; }
.phead span { display: flex; align-items: center; gap: 4px; }
.phead button { height: 16px; }
.panel .pick { border: 1px solid #c4c4c4; border-radius: 3px; background: #fff; }
.panel .cur { height: 32px; padding-left: 7px; font-size: 20px; font-weight: bold; color: #000; }
.cur::after { width: 8px; height: 5px; margin-right: 8px; background: #555; }
.pbtn { display: flex; gap: 10px; margin-top: 7px; }
.pbtn button { width: 78px; height: 23px; border: 1px solid #c4c4c4; border-radius: 2px; background: #fff; color: #555; }
.panel h2 { margin: 20px 0 6px; font-size: 14px; line-height: 21px; font-weight: normal; color: #3a6fc4; }
.list { flex: 1; border: 1px solid #c4c4c4; border-radius: 2px; background: #fff; padding: 2px 12px 0 2px; color: #000; }
.list button { justify-content: space-between; width: 100%; height: 34px; padding: 0 5px 0 4px; border: 1px solid transparent; }
.list button svg { margin-bottom: 8px; }
.list button.sel { border-color: #8fb0dc; }
.h22 { font-size: 21px; font-weight: bold; }
.h20 { font-size: 20px; font-weight: bold; }
.h18 { font-size: 18px; font-weight: bold; }
.n13 { font-size: 13px; }
.n16 { font-size: 16px; }
.n13 u { margin-bottom: 8px; font-size: 11px; }
.show { display: flex; align-items: center; justify-content: space-between; margin-top: 8px; }
.show .pick { width: 203px; height: 22px; padding-left: 3px; border-radius: 4px; }

/* task sidebar */
.side { flex: none; display: flex; flex-direction: column; align-items: center; gap: 12px; width: 36px; padding: 11px 2px 0 0; background: #d8d8d8; }
.side button { width: 24px; height: 24px; }
.grip { width: 16px; height: 4px; margin-bottom: 4px; border: solid #aaa; border-width: 1px 0; }
.line { width: 30px; height: 1px; background: #bdbdbd; }

/* status bar */
.status { flex: none; display: flex; align-items: center; height: 29px; border-top: 1px solid #c8c8c8; color: #555; }
.sinfo { display: flex; flex: 1; }
.sinfo > span { display: flex; align-items: center; height: 24px; padding: 0 5px 0 10px; border-right: 1px solid #d0d0d0; }
.sinfo > span:first-child { padding-left: 9px; }
.sinfo > .two { gap: 16px; }
.sinfo > .pos { gap: 13px; padding-right: 12px; }
.sinfo > .cert { padding-left: 13px; gap: 6px; border: 0; }
.views { display: flex; align-items: center; gap: 2px; padding-right: 7px; border-right: 1px solid #d0d0d0; }
.views button { width: 24px; height: 24px; }
.zoom { display: flex; align-items: center; gap: 11px; padding: 0 16px 0 12px; }
.pct { gap: 6px; margin-right: -1px; font-size: 13px; color: #333; }
.zoom input { appearance: none; width: 139px; height: 14px; background: linear-gradient(#777, #777) 0 50% / 100% 1px no-repeat, linear-gradient(#999, #999) 68px 50% / 1px 8px no-repeat; }
.zoom input::-webkit-slider-thumb { appearance: none; width: 12px; height: 12px; border: 1px solid #555; border-radius: 50%; background: #eee; }

/* desktop widgets floating above the window */
.net { position: absolute; right: 17px; bottom: 128px; display: flex; align-items: center; color: #fff; }
.ring { position: relative; z-index: 1; display: grid; place-items: center; margin-right: -24px; }
.ring > * { grid-area: 1 / 1; }
.ring span { font: 300 24px/28px "Open Sans", sans-serif; }
.ring small { font-size: 11px; }
.speed { width: 83px; height: 42px; padding: 0 8px 0 27px; border-radius: 0 21px 21px 0; background: #33363f; box-shadow: 0 0 6px rgba(0, 0, 0, .35); }
.speed span { display: flex; align-items: center; height: 21px; }
.speed span + span { border-top: 1px solid #292b33; }
.speed small { margin-left: 1px; font-size: 10px; color: #999; }
.speed svg { margin-right: auto; }
.ime { position: absolute; right: 38px; bottom: 105px; display: flex; align-items: center; justify-content: space-between; width: 144px; height: 26px; padding: 0 5px 0 26px; border: 1px solid #b8cdea; background: #fff; color: #0a6ad8; }
.ime b { font-size: 15px; }
.slogo { position: absolute; left: -11px; top: -5px; }
.mark { position: absolute; right: 10px; bottom: 8px; display: flex; opacity: .8; }
.mark div { display: flex; flex-direction: column; }
.mark strong { font-size: 21px; line-height: 24px; font-weight: bold; color: #3b82cc; }
.mark a { font: bold 15px/20px "Open Sans", sans-serif; color: #43b860; text-decoration: none; }
```
